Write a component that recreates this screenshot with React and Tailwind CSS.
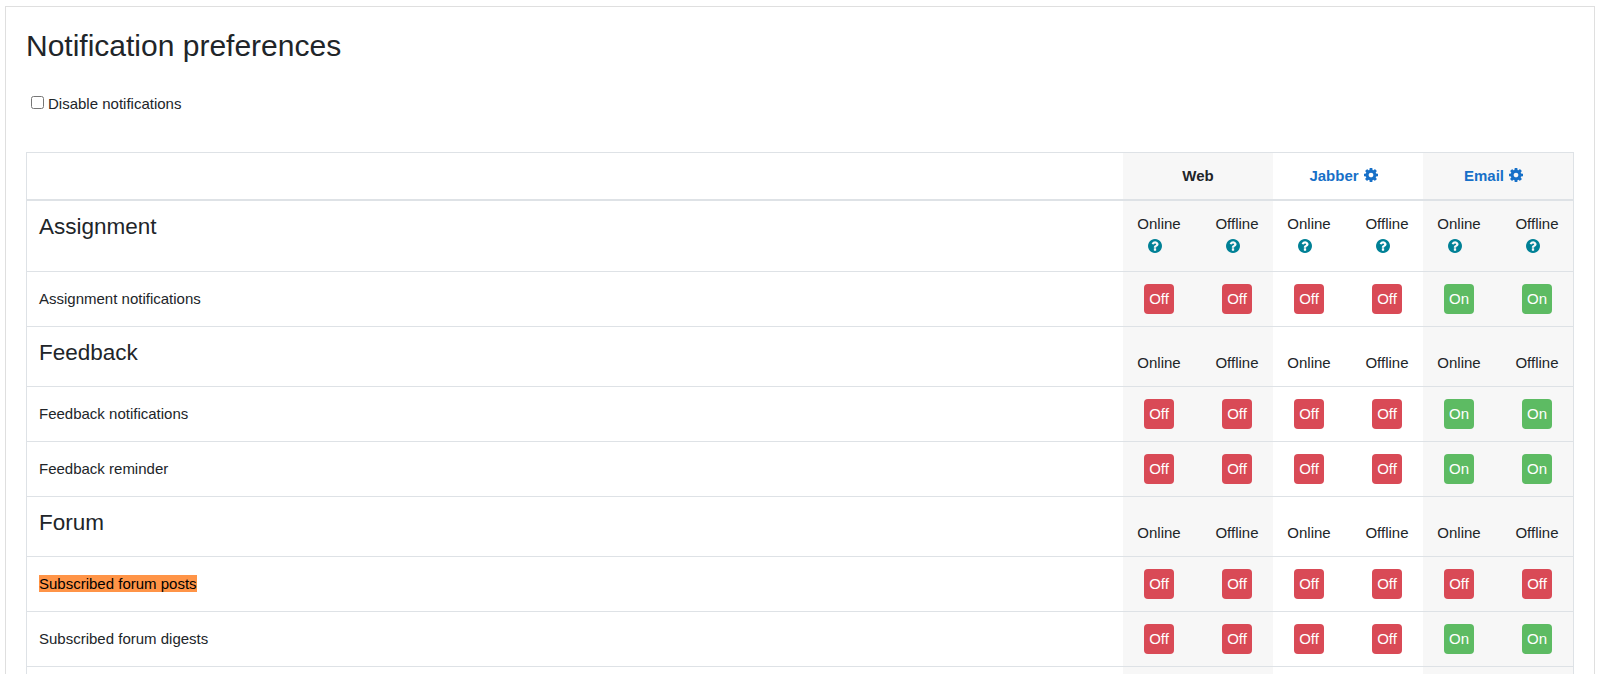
import { useState } from "react";

const processors = [
  { id: "web", label: "Web" },
  { id: "jabber", label: "Jabber", configurable: true },
  { id: "email", label: "Email", configurable: true },
];

// each row holds [online, offline] per processor
const components = [
  {
    name: "Assignment",
    help: true,
    rows: [{ name: "Assignment notifications", states: [0, 0, 0, 0, 1, 1] }],
  },
  {
    name: "Feedback",
    rows: [
      { name: "Feedback notifications", states: [0, 0, 0, 0, 1, 1] },
      { name: "Feedback reminder", states: [0, 0, 0, 0, 1, 1] },
    ],
  },
  {
    name: "Forum",
    rows: [
      { name: "Subscribed forum posts", states: [0, 0, 0, 0, 0, 0], highlighted: true },
      { name: "Subscribed forum digests", states: [0, 0, 0, 0, 1, 1] },
    ],
  },
];

const CogIcon = () => (
  <svg viewBox="128 128 1536 1536" className="w-3.5 h-3.5 -mt-0.5 mr-[9px]" fill="currentColor">
    <path d="M1152 896q0-106-75-181t-181-75-181 75-75 181 75 181 181 75 181-75 75-181zm512-109v222q0 12-8 23t-20 13l-185 28q-19 54-39 91 35 50 107 138 10 12 10 25t-9 23q-27 37-99 108t-94 71q-12 0-26-9l-138-108q-44 23-91 38-16 136-29 186-7 28-36 28h-222q-14 0-24.5-8.5t-11.5-21.5l-28-184q-49-16-90-37l-141 107q-10 9-25 9-14 0-25-11-126-114-165-168-7-10-7-23 0-12 8-23 15-21 51-66.5t54-70.5q-27-50-41-99l-183-27q-13-2-21-12.5t-8-23.5v-222q0-12 8-23t19-13l186-28q14-46 39-92-40-57-107-138-10-12-10-24 0-10 9-23 26-36 98.5-107.5t94.5-71.5q13 0 26 10l138 107q44-23 91-38 16-136 29-186 7-28 36-28h222q14 0 24.5 8.5t11.5 21.5l28 184q49 16 90 37l142-107q9-9 24-9 13 0 25 10 129 119 165 170 7 8 7 22 0 12-8 23-15 21-51 66.5t-54 70.5q26 50 41 98l183 28q13 2 21 12.5t8 23.5z" />
  </svg>
);

const HelpIcon = () => (
  <svg viewBox="128 128 1536 1536" className="w-3.5 h-3.5 mr-2 text-[#008196]" fill="currentColor">
    <path d="M1024 1376v-192q0-14-9-23t-23-9h-192q-14 0-23 9t-9 23v192q0 14 9 23t23 9h192q14 0 23-9t9-23zm256-672q0-88-55.5-163t-138.5-116-170-41q-243 0-371 213-15 24 8 42l132 100q7 6 19 6 16 0 25-12 53-68 86-92 34-24 86-24 48 0 85.5 26t37.5 59q0 38-20 61t-68 45q-63 28-115.5 86.5t-52.5 125.5v36q0 14 9 23t23 9h192q14 0 23-9t9-23q0-19 21.5-49.5t54.5-49.5q32-18 49-28.5t46-35 44.5-48 28-60.5 12.5-81zm384 192q0 209-103 385.5t-279.5 279.5-385.5 103-385.5-103-279.5-279.5-103-385.5 103-385.5 279.5-279.5 385.5-103 385.5 103 279.5 279.5 103 385.5z" />
  </svg>
);

const ProcessorCell = ({ index, children }) => (
  <div className={`w-[150px] shrink-0 flex justify-between ${index % 2 === 0 ? "bg-[#f7f7f7]" : ""}`}>
    {children}
  </div>
);

const StateLabel = ({ label, help }) => (
  <div className={`w-[72px] flex flex-col items-center leading-[22px] ${help ? "pt-3" : "pt-[25px]"}`}>
    <span>{label}</span>
    {help && (
      <span className="h-[22px] flex items-center">
        <HelpIcon />
      </span>
    )}
  </div>
);

const Toggle = ({ on, onClick }) => (
  <div className="w-[72px] flex items-center justify-center">
    <button
      onClick={onClick}
      className={`w-[30px] h-[30px] rounded-[4px] text-white ${on ? "bg-[#5dbb63]" : "bg-[#d94a56]"}`}
    >
      {on ? "On" : "Off"}
    </button>
  </div>
);

const PreferenceRow = ({ row }) => {
  const [states, setStates] = useState(row.states);

  const toggle = (i) => setStates(states.map((s, n) => (n === i ? 1 - s : s)));

  return (
    <div className="flex h-[55px] border-t border-[#dee2e6]">
      <div className="flex-1 pl-3 pt-4 leading-[22px]">
        <span className={row.highlighted ? "bg-[#ff9447] text-black" : ""}>{row.name}</span>
      </div>
      {processors.map((processor, i) => (
        <ProcessorCell key={processor.id} index={i}>
          <Toggle on={states[i * 2]} onClick={() => toggle(i * 2)} />
          <Toggle on={states[i * 2 + 1]} onClick={() => toggle(i * 2 + 1)} />
        </ProcessorCell>
      ))}
    </div>
  );
};

const ComponentSection = ({ component, first }) => (
  <>
    <div className={`flex border-[#dee2e6] ${first ? "border-t-2 h-[72px]" : "border-t h-[60px]"}`}>
      <h3 className="flex-1 pl-3 pt-3 text-[22.5px] leading-[27px]">{component.name}</h3>
      {processors.map((processor, i) => (
        <ProcessorCell key={processor.id} index={i}>
          <StateLabel label="Online" help={component.help} />
          <StateLabel label="Offline" help={component.help} />
        </ProcessorCell>
      ))}
    </div>
    {component.rows.map((row) => (
      <PreferenceRow key={row.name} row={row} />
    ))}
  </>
);

const App = () => {
  const [disabled, setDisabled] = useState(false);

  return (
    <div className="h-[674px] overflow-hidden bg-white pl-[5px] pr-[6px] pt-1.5 font-['Liberation_Sans',Arial,sans-serif] text-[15px] leading-[22.5px] text-[#212529]">
      <div className="h-[668px] overflow-hidden border border-b-0 border-[#dfdfdf] px-5 pt-[21px]">
        <h2 className="text-[30px] leading-9">Notification preferences</h2>

        <label className="mt-[29px] ml-[5px] flex h-[22px] items-center">
          <input
            type="checkbox"
            className="w-[13px] h-[13px] mr-1 -mt-[3px]"
            checked={disabled}
            onChange={(e) => setDisabled(e.target.checked)}
          />
          Disable notifications
        </label>

        <div className="mt-[37px] border border-[#dee2e6]">
          <div className="flex h-[46px]">
            <div className="flex-1"></div>
            {processors.map((processor, i) => (
              <ProcessorCell key={processor.id} index={i}>
                <div className="flex-1 flex items-center justify-center font-bold">
                  {processor.configurable ? (
                    <a href="#" className="flex items-center gap-[5px] text-[#1770c8]">
                      {processor.label}
                      <CogIcon />
                    </a>
                  ) : (
                    processor.label
                  )}
                </div>
              </ProcessorCell>
            ))}
          </div>

          {components.map((component, i) => (
            <ComponentSection key={component.name} component={component} first={i === 0} />
          ))}

          <div className="flex h-[60px] border-t border-[#dee2e6]">
            <div className="flex-1"></div>
            {processors.map((processor, i) => (
              <ProcessorCell key={processor.id} index={i} />
            ))}
          </div>
        </div>
      </div>
    </div>
  );
};

export default App;
